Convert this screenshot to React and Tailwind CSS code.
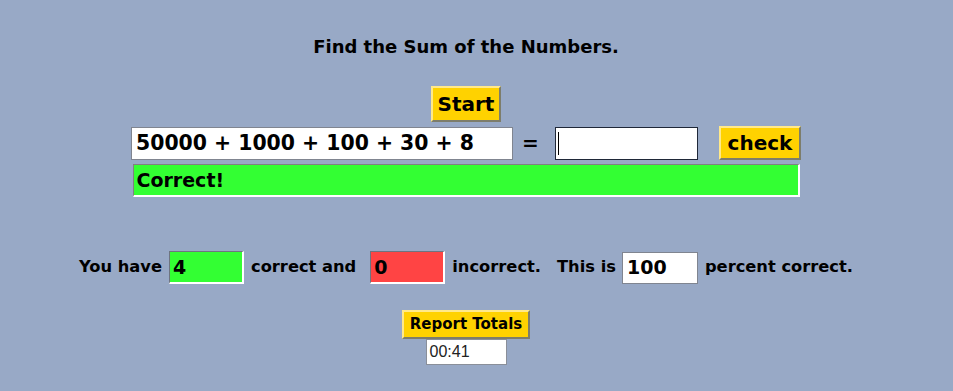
import React from 'react';

const font = { fontFamily: '"DejaVu Sans", Verdana, sans-serif' };

const YellowButton = ({ children, className }) => (
  <button
    className={`bg-[#ffd200] border-2 border-t-[#ffe98a] border-l-[#ffe98a] border-b-[#7d7d6a] border-r-[#7d7d6a] font-bold text-black leading-none ${className}`}
  >
    {children}
  </button>
);

const Box = ({ value, className }) => (
  <div
    className={`flex items-center pl-[3px] font-bold text-[19px] text-black border border-t-[#6e7480] border-l-[#6e7480] border-b-white border-r-white border-b-2 border-r-2 ${className}`}
  >
    {value}
  </div>
);

export default function App() {
  return (
    <div className="w-[953px] h-[391px] bg-[#98a9c6] overflow-hidden" style={font}>
      <div className="w-[932px] flex flex-col items-center">
        <h1 className="mt-[36px] text-[18px] font-bold text-black leading-[22px]">
          Find the Sum of the Numbers.
        </h1>

        <YellowButton className="mt-[28px] w-[70px] h-[36px] text-[20px]">Start</YellowButton>

        <div className="mt-[4px] flex items-center">
          <div className="w-[382px] h-[33px] bg-white border border-[#808590] flex items-center pl-[4px] text-[20.4px] font-bold text-black">
            50000 + 1000 + 100 + 30 + 8
          </div>
          <span className="ml-[9px] w-[17px] text-[20px] font-bold text-black">=</span>
          <div className="ml-[16px] w-[143px] h-[33px] bg-white border border-[#1f2838] flex items-center pl-[2px]">
            <div className="w-px h-[23px] bg-black" />
          </div>
          <YellowButton className="ml-[21px] w-[82px] h-[34px] text-[20px]">check</YellowButton>
        </div>

        <div className="mt-[4px] w-[667px] h-[33px] bg-[#33ff33] flex items-center pl-[3px] text-[19px] font-bold text-black border border-t-[#808080] border-l-[#808080] border-b-2 border-r-2 border-b-white border-r-white">
          Correct!
        </div>

        <div className="mt-[54px] flex items-center text-[16.3px] font-bold text-black">
          <span>You have</span>
          <Box value="4" className="ml-[7px] w-[75px] h-[33px] bg-[#33ff33]" />
          <span className="ml-[7px]">correct and</span>
          <Box value="0" className="ml-[14px] w-[75px] h-[33px] bg-[#ff4444]" />
          <span className="ml-[7px]">incorrect.</span>
          <span className="ml-[16px]">This is</span>
          <div className="ml-[6px] w-[76px] h-[32px] bg-white border border-[#808590] flex items-center pl-[4px] text-[19px] font-bold">
            100
          </div>
          <span className="ml-[7px]">percent correct.</span>
        </div>

        <YellowButton className="mt-[26px] w-[128px] h-[29px] text-[15px]">Report Totals</YellowButton>
        <div
          className="w-[81px] h-[26px] bg-white border border-[#8a8f99] flex items-center pl-[3px] text-[16px] text-[#222]"
          style={{ fontFamily: '"Liberation Sans", Arial, sans-serif' }}
        >
          00:41
        </div>
      </div>
    </div>
  );
}
